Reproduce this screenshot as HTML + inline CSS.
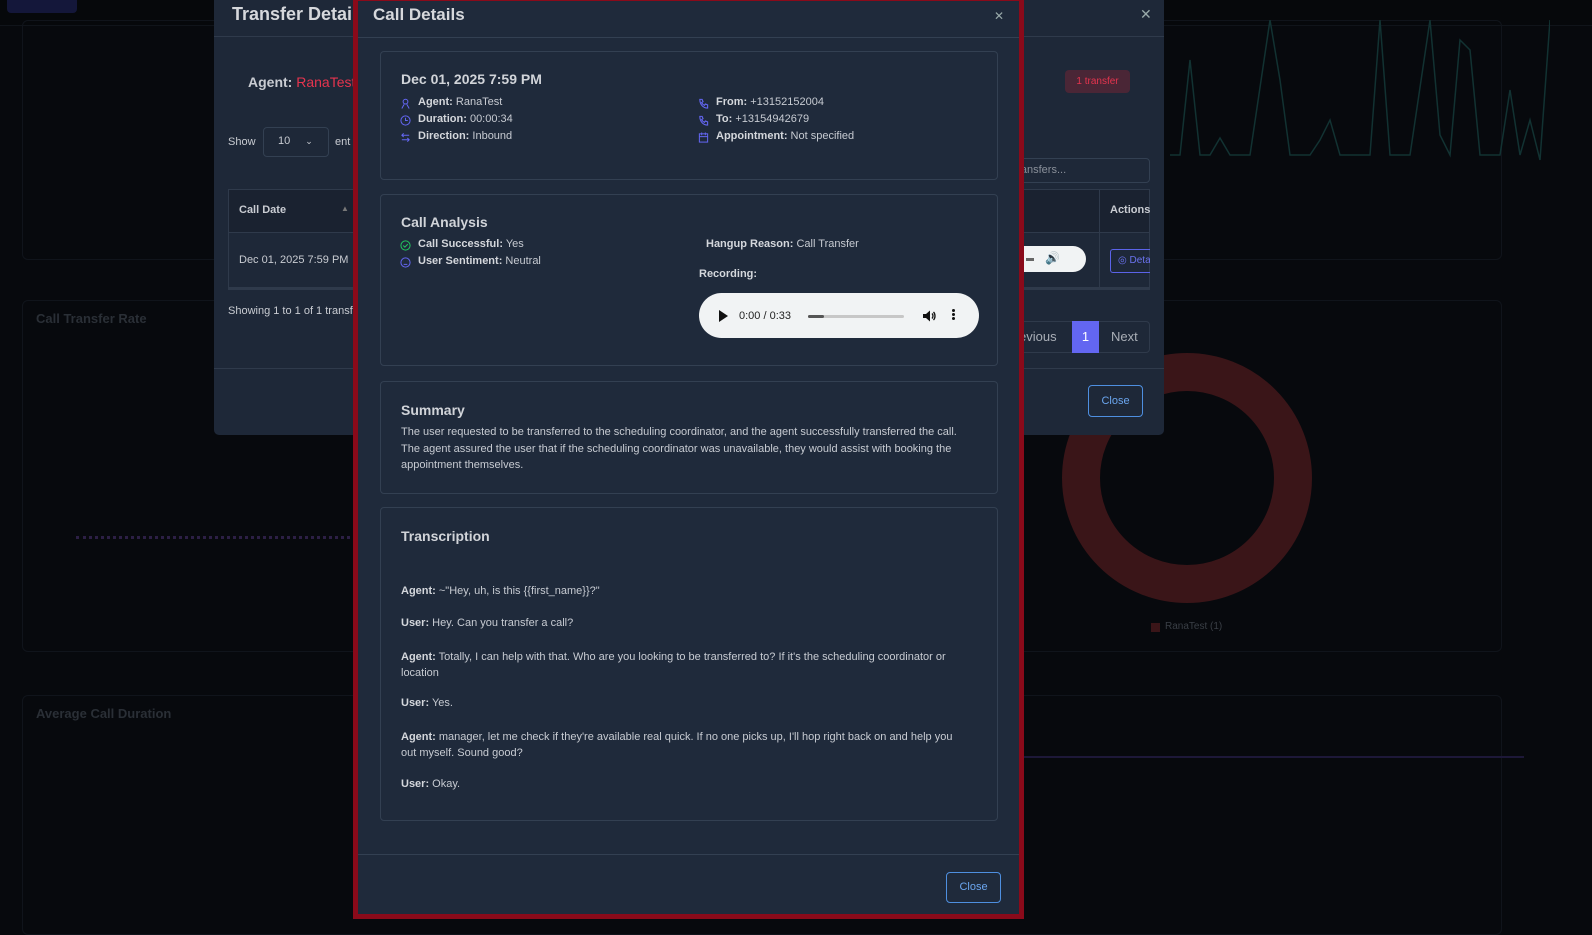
<!DOCTYPE html>
<html><head><meta charset="utf-8"><style>
*{box-sizing:border-box;margin:0;padding:0}
body{width:1592px;height:921px;overflow:hidden;background:#07090d;font-family:"Liberation Sans",sans-serif;position:relative;color:#c9ccd2}
.a{position:absolute;white-space:nowrap}
.panel{position:absolute;border:1px solid #10141b;border-radius:6px}
.tm{position:absolute;left:214px;top:0;width:950px;height:435px;background:#1e2838;border-radius:0 0 5px 5px}
.cm{position:absolute;left:353px;top:-4px;width:671px;height:923px;background:#1f2a3b;border:5px solid #8a0a1a}
.card{position:absolute;left:22px;width:618px;border:1px solid #334052;border-radius:4px}
.t{font-size:11px;color:#c7cbd2}
.t b{color:#d4d7dc}
.h{font-size:14px;font-weight:bold;color:#d1d4d9}
svg{position:absolute}
</style></head><body>
<div class="a" style="left:0;top:0;width:1592px;height:26px;background:#06080b;border-bottom:1px solid #10141a"></div>
<div class="a" style="left:7px;top:-6px;width:70px;height:19px;background:#14173a;border-radius:4px"></div>
<div class="panel" style="left:22px;top:20px;width:1480px;height:240px"></div>
<svg style="left:1170px;top:20px" width="380" height="150"><polyline fill="none" stroke="#123232" stroke-width="1.5" points="0,135 10,135 20,40 30,135 40,135 50,118 60,135 80,135 100,0 110,60 120,135 140,135 150,120 160,100 170,135 200,135 210,0 220,135 240,135 260,0 270,115 280,135 290,20 300,30 310,135 330,135 340,70 350,135 360,100 370,140 380,0"/></svg>
<div class="panel" style="left:22px;top:300px;width:1480px;height:352px"></div>
<div class="a" style="left:36px;top:311px;font-size:13px;font-weight:bold;color:#2a2f36">Call Transfer Rate</div>
<div class="a" style="left:76px;top:536px;width:280px;border-top:3px dotted #2c1f45"></div>
<div class="panel" style="left:22px;top:695px;width:1480px;height:240px"></div>
<div class="a" style="left:36px;top:706px;font-size:13px;font-weight:bold;color:#2a2f36">Average Call Duration</div>
<div class="a" style="left:1024px;top:756px;width:500px;border-top:2px solid #1d1838"></div>
<div class="a" style="left:1062px;top:353px;width:250px;height:250px;border-radius:50%;border:38px solid #3a1518"></div>
<div class="a" style="left:1165px;top:621px;font-size:10px;color:#3a3f46">RanaTest (1)</div>
<div class="a" style="left:1151px;top:623px;width:9px;height:9px;background:#3a1518"></div>

<div class="tm">
 <div class="a" style="left:18px;top:4px;font-size:18px;font-weight:bold;color:#d6d8dc">Transfer Details</div>
 <div class="a" style="left:0;top:36px;width:950px;border-top:1px solid #2f3a4b"></div>
 <div class="a" style="left:34px;top:74px;font-size:14px;font-weight:bold;color:#c9ccd2">Agent: <span style="color:#e5344e;font-weight:normal">RanaTest</span></div>
 <div class="a" style="left:851px;top:70px;width:65px;height:23px;background:#4a2636;border-radius:4px;color:#e5344e;font-size:10px;text-align:center;line-height:23px">1 transfer</div>
 <div class="a" style="left:14px;top:136px;font-size:11px">Show</div>
 <div class="a" style="left:49px;top:127px;width:66px;height:30px;border:1px solid #334052;border-radius:4px;font-size:11px;padding:7px 0 0 14px">10 <span style="margin-left:12px;font-size:9px">&#8964;</span></div>
 <div class="a" style="left:121px;top:136px;font-size:11px">ent</div>
 <div class="a" style="left:780px;top:158px;width:156px;height:25px;border:1px solid #334052;border-radius:4px;font-size:11px;color:#8a909a;padding:5px 0 0 10px">h transfers...</div>
 <div class="a" style="left:14px;top:189px;width:922px;height:44px;background:#1a2230;border:1px solid #2f3a4b"></div>
 <div class="a" style="left:14px;top:232px;width:922px;height:58px;border:1px solid #2f3a4b;border-bottom:3px solid #2f3a4b"></div>
 <div class="a" style="left:885px;top:189px;height:101px;border-left:1px solid #2f3a4b"></div>
 <div class="a" style="left:25px;top:204px;font-size:11px;font-weight:bold">Call Date</div>
 <div class="a" style="left:127px;top:204px;font-size:8px;color:#777">&#9650;</div>
 <div class="a" style="left:25px;top:254px;font-size:11px">Dec 01, 2025 7:59 PM</div>
 <div class="a" style="left:896px;top:204px;font-size:11px;font-weight:bold">Actions</div>
 <div class="a" style="left:790px;top:246px;width:82px;height:26px;background:#f1f3f4;border-radius:0 13px 13px 0"></div>
 <div class="a" style="left:812px;top:258px;width:8px;height:3px;background:#666"></div>
 <div class="a" style="left:831px;top:251px;font-size:12px;color:#111">&#128266;</div>
 <div class="a" style="left:896px;top:249px;width:40px;height:24px;border:1px solid #5b63e8;border-right:none;border-radius:3px 0 0 3px;font-size:10px;color:#6b73f0;padding:5px 0 0 7px;overflow:hidden">&#9678; Deta</div>
 <div class="a" style="left:14px;top:305px;font-size:11px">Showing 1 to 1 of 1 transf</div>
 <div class="a" style="left:780px;top:321px;width:156px;height:32px;border:1px solid #2f3a4b;border-radius:4px"></div>
 <div class="a" style="left:805px;top:329px;font-size:13px;color:#a9aeb6">evious</div>
 <div class="a" style="left:858px;top:321px;width:27px;height:32px;background:#6366f1;color:#fff;font-size:13px;text-align:center;line-height:32px">1</div>
 <div class="a" style="left:897px;top:329px;font-size:13px;color:#a9aeb6">Next</div>
 <div class="a" style="left:0;top:368px;width:950px;border-top:1px solid #2f3a4b"></div>
 <div class="a" style="left:874px;top:385px;width:55px;height:32px;border:1px solid #4e8fe0;border-radius:4px;color:#6ba6ef;font-size:11px;text-align:center;line-height:30px">Close</div>
 <div class="a" style="left:926px;top:6px;font-size:14px;color:#9aa">&#10005;</div>
</div>

<div class="cm">
 <div class="a" style="left:15px;top:4px;font-size:17px;font-weight:bold;color:#d6d8dc">Call Details</div>
 <div class="a" style="left:636px;top:8px;font-size:12px;color:#9aa">&#10005;</div>
 <div class="a" style="left:0;top:36px;width:661px;border-top:1px solid #334052"></div>

 <div class="card" style="top:50px;height:129px">
  <div class="a h" style="left:20px;top:19px">Dec 01, 2025 7:59 PM</div>
  <svg style="left:19px;top:46px" width="11" height="11" viewBox="0 0 12 12" fill="none" stroke="#6366f1" stroke-width="1.1"><circle cx="6" cy="4" r="2.6"/><path d="M2 11.5 L4.5 7 M10 11.5 L7.5 7"/></svg>
  <div class="a t" style="left:37px;top:44px"><b>Agent:</b> RanaTest</div>
  <svg style="left:19px;top:63px" width="11" height="11" viewBox="0 0 12 12" fill="none" stroke="#6366f1" stroke-width="1.1"><circle cx="6" cy="6" r="5"/><path d="M6 3v3h2.5"/></svg>
  <div class="a t" style="left:37px;top:61px"><b>Duration:</b> 00:00:34</div>
  <svg style="left:19px;top:80px" width="11" height="11" viewBox="0 0 12 12" fill="none" stroke="#6366f1" stroke-width="1.1"><path d="M2 3.5h8M4 1.5L2 3.5 4 5.5M10 8.5H2M8 6.5l2 2-2 2"/></svg>
  <div class="a t" style="left:37px;top:78px"><b>Direction:</b> Inbound</div>
  <svg style="left:317px;top:46px" width="11" height="11" viewBox="0 0 12 12" fill="none" stroke="#6366f1" stroke-width="1.2"><path d="M2 1.5h2.5l1 2.5-1.5 1c.8 1.6 1.6 2.4 3 3l1-1.5 2.5 1V11c-5 0-8.5-4-8.5-9.5z"/></svg>
  <div class="a t" style="left:335px;top:44px"><b>From:</b> +13152152004</div>
  <svg style="left:317px;top:63px" width="11" height="11" viewBox="0 0 12 12" fill="none" stroke="#6366f1" stroke-width="1.2"><path d="M2 1.5h2.5l1 2.5-1.5 1c.8 1.6 1.6 2.4 3 3l1-1.5 2.5 1V11c-5 0-8.5-4-8.5-9.5z"/></svg>
  <div class="a t" style="left:335px;top:61px"><b>To:</b> +13154942679</div>
  <svg style="left:317px;top:80px" width="11" height="11" viewBox="0 0 12 12" fill="none" stroke="#6366f1" stroke-width="1.1"><rect x="1.5" y="2" width="9" height="9"/><path d="M1.5 5h9M4 0.5v3M8 0.5v3"/></svg>
  <div class="a t" style="left:335px;top:78px"><b>Appointment:</b> Not specified</div>
 </div>

 <div class="card" style="top:193px;height:172px">
  <div class="a h" style="left:20px;top:19px">Call Analysis</div>
  <svg style="left:19px;top:45px" width="11" height="11" viewBox="0 0 12 12" fill="none" stroke="#22c55e" stroke-width="1.1"><circle cx="6" cy="6" r="5"/><path d="M3.5 6l1.8 1.8L8.5 4.5"/></svg>
  <div class="a t" style="left:37px;top:43px"><b>Call Successful:</b> Yes</div>
  <svg style="left:19px;top:62px" width="11" height="11" viewBox="0 0 12 12" fill="none" stroke="#6366f1" stroke-width="1.1"><circle cx="6" cy="6" r="5"/><path d="M4 8h4M4.2 4.5h.1M7.7 4.5h.1"/></svg>
  <div class="a t" style="left:37px;top:60px"><b>User Sentiment:</b> Neutral</div>
  <div class="a t" style="left:325px;top:43px"><b>Hangup Reason:</b> Call Transfer</div>
  <div class="a t" style="left:318px;top:73px"><b>Recording:</b></div>
  <div class="a" style="left:318px;top:98px;width:280px;height:45px;background:#f1f3f4;border-radius:23px"></div>
  <div class="a" style="left:338px;top:115px;width:0;height:0;border-left:9px solid #111;border-top:6px solid transparent;border-bottom:6px solid transparent"></div>
  <div class="a" style="left:358px;top:115px;font-size:11px;color:#222">0:00 / 0:33</div>
  <div class="a" style="left:427px;top:120px;width:96px;height:3px;background:#c7c7c7;border-radius:2px"></div>
  <div class="a" style="left:427px;top:120px;width:16px;height:3px;background:#555;border-radius:2px"></div>
  <svg style="left:541px;top:114px" width="14" height="14" viewBox="0 0 14 14"><path d="M1 5h3l4-3.5v11L4 9H1z" fill="#111"/><path d="M10 4.5c1.3 1.3 1.3 3.7 0 5M11.5 3c2 2 2 6 0 8" stroke="#111" stroke-width="1.3" fill="none"/></svg>
  <div class="a" style="left:571px;top:114px;width:3px;height:3px;background:#111;border-radius:50%;box-shadow:0 4px 0 #111,0 8px 0 #111"></div>
 </div>

 <div class="card" style="top:380px;height:113px">
  <div class="a h" style="left:20px;top:20px">Summary</div>
  <div class="a t" style="left:20px;top:42px;line-height:16.5px;white-space:normal;width:565px">The user requested to be transferred to the scheduling coordinator, and the agent successfully transferred the call. The agent assured the user that if the scheduling coordinator was unavailable, they would assist with booking the appointment themselves.</div>
 </div>

 <div class="card" style="top:506px;height:314px">
  <div class="a h" style="left:20px;top:20px">Transcription</div>
  <div class="a t" style="left:20px;top:77px"><b>Agent:</b> ~"Hey, uh, is this {{first_name}}?"</div>
  <div class="a t" style="left:20px;top:109px"><b>User:</b> Hey. Can you transfer a call?</div>
  <div class="a t" style="left:20px;top:141px;line-height:16px;white-space:normal;width:585px"><b>Agent:</b> Totally, I can help with that. Who are you looking to be transferred to? If it's the scheduling coordinator or location</div>
  <div class="a t" style="left:20px;top:189px"><b>User:</b> Yes.</div>
  <div class="a t" style="left:20px;top:221px;line-height:16px;white-space:normal;width:560px"><b>Agent:</b> manager, let me check if they're available real quick. If no one picks up, I'll hop right back on and help you out myself. Sound good?</div>
  <div class="a t" style="left:20px;top:270px"><b>User:</b> Okay.</div>
 </div>

 <div class="a" style="left:0;top:853px;width:661px;border-top:1px solid #334052"></div>
 <div class="a" style="left:588px;top:871px;width:55px;height:31px;border:1px solid #4e8fe0;border-radius:4px;color:#6ba6ef;font-size:11px;text-align:center;line-height:29px">Close</div>
</div>
</body></html>
